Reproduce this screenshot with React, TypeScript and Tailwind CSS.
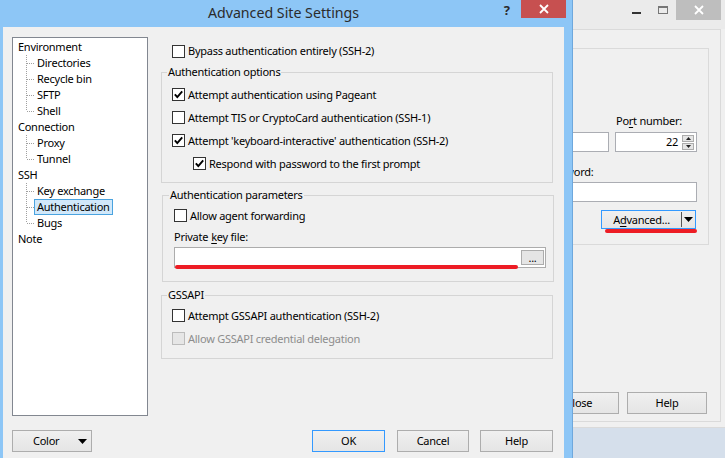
import React from "react";

const tree = [
  { label: "Environment", children: ["Directories", "Recycle bin", "SFTP", "Shell"] },
  { label: "Connection", children: ["Proxy", "Tunnel"] },
  { label: "SSH", children: ["Key exchange", "Authentication", "Bugs"] },
  { label: "Note", children: [] as string[] },
];

const selected = "Authentication";

function CheckBox({
  label,
  checked = false,
  disabled = false,
  className = "",
}: {
  label: string;
  checked?: boolean;
  disabled?: boolean;
  className?: string;
}) {
  return (
    <div className={`flex h-[23px] items-center ${className}`}>
      <span
        className={`flex h-[13px] w-[13px] shrink-0 items-center justify-center border ${
          disabled ? "border-[#bcbcbc] bg-[#e6e6e6]" : "border-[#333333] bg-white"
        }`}
      >
        {checked && (
          <svg width="11" height="11" viewBox="0 0 11 11">
            <path d="M1.8 5.4 4.3 8 9.2 2.3" fill="none" stroke="#000" strokeWidth="1.9" />
          </svg>
        )}
      </span>
      <span className={`ml-[3px] ${disabled ? "text-[#8d8d8d]" : "text-black"}`}>{label}</span>
    </div>
  );
}

function Button({
  children,
  className = "",
  primary = false,
}: {
  children: React.ReactNode;
  className?: string;
  primary?: boolean;
}) {
  return (
    <div
      className={`flex h-[22px] items-center justify-center border bg-linear-to-b from-[#f0f0f0] to-[#e5e5e5] text-black ${
        primary ? "border-[#3399ff]" : "border-[#adadad]"
      } ${className}`}
    >
      {children}
    </div>
  );
}

function Triangle() {
  return (
    <svg width="9" height="5" viewBox="0 0 9 5">
      <path d="M0 0h9L4.5 5z" fill="#000" />
    </svg>
  );
}

function Connector({ last }: { last: boolean }) {
  return (
    <svg width="21" height="16" className="shrink-0">
      <line x1="13.5" y1="0" x2="13.5" y2={last ? 8 : 16} stroke="#a0a0a0" strokeDasharray="1 1" />
      <line x1="14" y1="8.5" x2="21" y2="8.5" stroke="#a0a0a0" strokeDasharray="1 1" />
    </svg>
  );
}

function Tree() {
  return (
    <div className="h-[379px] w-[136px] shrink-0 border border-[#828790] bg-white pt-[1px]">
      {tree.map((node) => (
        <div key={node.label}>
          <div className="flex h-[16px] items-center pl-[5px]">{node.label}</div>
          {node.children.map((child, i) => (
            <div key={child} className="flex h-[16px] items-center">
              <Connector last={i === node.children.length - 1} />
              <span
                className={`flex h-[16px] items-center border px-[2px] ${
                  child === selected ? "border-[#4aa3df] bg-[#d1e8fa]" : "border-transparent"
                }`}
              >
                {child}
              </span>
            </div>
          ))}
        </div>
      ))}
    </div>
  );
}

function AdvancedDialog() {
  return (
    <div className="absolute left-[-5px] top-0 flex h-[470px] w-[578px] flex-col border-r border-[#6ea8dd] bg-[#8dc6f6]">
      {/* title bar */}
      <div className="relative flex h-[27px] shrink-0 items-center justify-center">
        <span className="pb-[1px] text-[14.2px] tracking-normal text-[#2b2b2b]">Advanced Site Settings</span>
        <span className="absolute right-[62px] top-[2px] text-[13px] font-bold tracking-normal text-[#2b2b2b]">?</span>
        <div className="absolute right-[6px] top-0 flex h-[18px] w-[45px] items-center justify-center bg-[#c75050]">
          <svg width="10" height="10" viewBox="0 0 10 10">
            <path d="M1 1l8 8M9 1l-8 8" stroke="#fff" strokeWidth="1.8" />
          </svg>
        </div>
      </div>

      {/* client area */}
      <div className="mx-[8px] flex flex-1 flex-col bg-[#f0f0f0] pl-[9px] pr-[11px] pt-[10px]">
        <div className="flex">
          <Tree />

          <div className="ml-[13px] flex w-[393px] flex-col pt-[6px]">
            <CheckBox label="Bypass authentication entirely (SSH-2)" className="!h-[16px] pl-[11px]" />

            <fieldset className="mt-[5px] w-[392px] border border-[#d5d5d5] pb-[7px] pl-[10px] pt-[3px]">
              <legend className="ml-[-5px] px-[1px]">Authentication options</legend>
              <CheckBox label="Attempt authentication using Pageant" checked />
              <CheckBox label="Attempt TIS or CryptoCard authentication (SSH-1)" />
              <CheckBox label="Attempt 'keyboard-interactive' authentication (SSH-2)" checked />
              <CheckBox label="Respond with password to the first prompt" checked className="ml-[21px]" />
            </fieldset>

            <fieldset className="ml-[1px] mt-[4px] w-[392px] border border-[#d5d5d5] pb-[13px] pl-[11px] pt-[1px]">
              <legend className="ml-[-5px] px-[1px]">Authentication parameters</legend>
              <CheckBox label="Allow agent forwarding" />
              <div className="flex h-[20px] items-center">
                Private <span className="ml-[3px] underline underline-offset-2">k</span>ey file:
              </div>
              <div className="relative flex h-[21px] w-[372px] items-center justify-end border border-[#acacac] bg-white pr-[1px]">
                <div className="flex h-[15px] w-[23px] items-end justify-center border border-[#acacac] bg-[#e5e5e5] text-[11px] leading-[12px]">
                  ...
                </div>
                <div className="absolute left-[0px] top-[17px] h-[4px] w-[343px] rounded-full bg-[#ed1c24]" />
              </div>
            </fieldset>

            <fieldset className="mt-[5px] w-[392px] border border-[#d5d5d5] pb-[8px] pl-[10px] pt-[1px]">
              <legend className="ml-[-5px] px-[1px]">GSSAPI</legend>
              <CheckBox label="Attempt GSSAPI authentication (SSH-2)" />
              <CheckBox label="Allow GSSAPI credential delegation" disabled />
            </fieldset>
          </div>
        </div>

        <div className="mt-[14px] flex">
          <Button className="w-[80px] !justify-between pl-[20px] pr-[4px]">
            <span>Color</span>
            <Triangle />
          </Button>
          <Button primary className="ml-auto w-[73px]">OK</Button>
          <Button className="ml-[12px] w-[72px]">Cancel</Button>
          <Button className="ml-[11px] w-[73px]">Help</Button>
        </div>
      </div>
    </div>
  );
}

function LoginWindow() {
  return (
    <div className="absolute left-[500px] top-0 flex h-[428px] w-[225px] flex-col border-b border-[#dadada] bg-[#f0f0f0]">
      {/* title bar */}
      <div className="flex h-[29px] shrink-0 items-start justify-end bg-[#ebebeb] pr-[4px]">
        <div className="mt-[12px] h-[2px] w-[9px] bg-[#333]" />
        <div className="ml-[17px] mt-[6px] h-[8px] w-[10px] border border-t-2 border-[#777]" />
        <div className="ml-[8px] flex h-[20px] w-[45px] items-center justify-center bg-[#bebebe]">
          <svg width="10" height="10" viewBox="0 0 10 10">
            <path d="M1 1l8 8M9 1l-8 8" stroke="#fff" strokeWidth="1.8" />
          </svg>
        </div>
      </div>

      <div className="ml-[5px] mr-[4px] flex h-[393px] flex-col border border-[#dadada]">
        <div className="ml-[10px] mr-[11px] mt-[18px] flex h-[197px] flex-col border border-[#dadada] pl-[23px] pr-[11px]">
          <div className="mt-[64px] flex h-[16px] justify-end">
            <span className="w-[82px] pl-[1px]">
              Po<span className="underline underline-offset-2">r</span>t number:
            </span>
          </div>
          <div className="mt-[3px] flex h-[20px] gap-[6px]">
            <div className="flex-1 border border-[#abadb3] bg-white" />
            <div className="flex w-[82px] items-center border border-[#abadb3] bg-white">
              <span className="flex-1 pr-[4px] text-right">22</span>
              <div className="mr-[2px] flex flex-col gap-[1px]">
                <div className="flex h-[7px] w-[12px] items-center justify-center border border-[#acacac] bg-[#e5e5e5]">
                  <svg width="5" height="3" viewBox="0 0 5 3">
                    <path d="M0 3h5L2.5 0z" fill="#222" />
                  </svg>
                </div>
                <div className="flex h-[7px] w-[12px] items-center justify-center border border-[#acacac] bg-[#e5e5e5]">
                  <svg width="5" height="3" viewBox="0 0 5 3">
                    <path d="M0 0h5L2.5 3z" fill="#222" />
                  </svg>
                </div>
              </div>
            </div>
          </div>
          <div className="mt-[12px] h-[16px] pl-[3px]">Password:</div>
          <div className="mt-[2px] h-[20px] border border-[#abadb3] bg-white" />
          <div className="relative mr-[1px] mt-[8px] flex h-[19px] w-[95px] self-end border border-[#3399ff] bg-linear-to-b from-[#f0f0f0] to-[#e5e5e5]">
            <span className="flex flex-1 items-center justify-center">
              A<span className="underline underline-offset-2">d</span>vanced...
            </span>
            <div className="my-[1px] w-px bg-[#555]" />
            <div className="flex w-[13px] items-center justify-center">
              <Triangle />
            </div>
            <div className="absolute left-[3px] top-[18px] h-[4px] w-[92px] rounded-full bg-[#ed1c24]" />
          </div>
        </div>

        <div className="mt-auto flex justify-end gap-[8px] pb-[7px] pr-[13px]">
          <Button className="w-[80px]">Close</Button>
          <Button className="w-[80px]">Help</Button>
        </div>
      </div>
    </div>
  );
}

export default function App() {
  return (
    <div className="relative h-[458px] w-[725px] overflow-hidden bg-[#d5dfeb] font-['Segoe_UI','Noto_Sans',sans-serif] text-[11px] leading-[16px] tracking-[-0.25px] text-black">
      <LoginWindow />
      <AdvancedDialog />
    </div>
  );
}
